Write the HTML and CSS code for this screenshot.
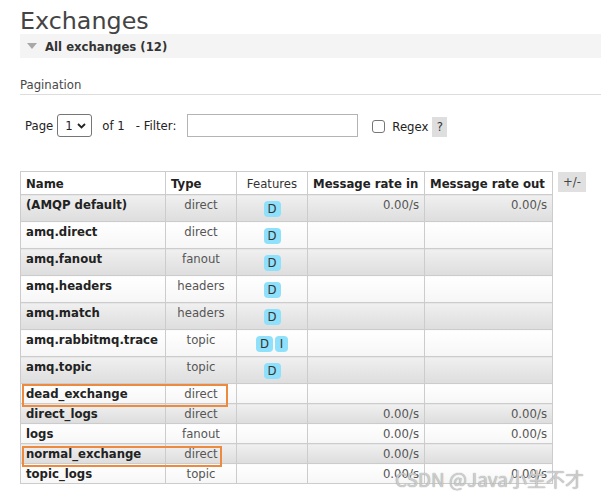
FILE: index.html
```html
<!DOCTYPE html>
<html lang="en">
<head>
<meta charset="utf-8">
<title>Exchanges</title>
<link rel="stylesheet" href="styles.css">
</head>
<body>
<main class="page">
  <h1 class="title">Exchanges</h1>
  <div class="section-bar">
    <svg class="tri" width="10" height="6" viewBox="0 0 10 6"><path d="M0 0H10L5 6Z" fill="#a8a8a8"/></svg>
    <span>All exchanges (12)</span>
  </div>
  <h3 class="pag-title">Pagination</h3>
  <div class="pager">
    <span class="lbl">Page</span>
    <span class="select"><span class="sel-val">1</span><svg width="9" height="6" viewBox="0 0 9 6"><path d="M1 1L4.5 4.5L8 1" fill="none" stroke="#222" stroke-width="1.8"/></svg></span>
    <span class="of">of 1</span>
    <span class="filter-lbl">- Filter:</span>
    <span class="input"></span>
    <span class="checkbox"></span>
    <span class="regex">Regex</span>
    <span class="help">?</span>
  </div>
  <div class="table-wrap">
    <table class="list">
      <colgroup>
        <col class="c-name"><col class="c-type"><col class="c-feat"><col class="c-in"><col class="c-out">
      </colgroup>
      <thead>
        <tr>
          <th>Name</th>
          <th>Type</th>
          <th class="plain">Features</th>
          <th>Message rate in</th>
          <th>Message rate out</th>
        </tr>
      </thead>
      <tbody>
        <tr class="alt1"><td class="name">(AMQP default)</td><td class="c">direct</td><td class="feat"><div class="badges"><abbr class="badge">D</abbr></div></td><td class="r">0.00/s</td><td class="r">0.00/s</td></tr>
        <tr class="alt2"><td class="name">amq.direct</td><td class="c">direct</td><td class="feat"><div class="badges"><abbr class="badge">D</abbr></div></td><td class="r"></td><td class="r"></td></tr>
        <tr class="alt1"><td class="name">amq.fanout</td><td class="c">fanout</td><td class="feat"><div class="badges"><abbr class="badge">D</abbr></div></td><td class="r"></td><td class="r"></td></tr>
        <tr class="alt2"><td class="name">amq.headers</td><td class="c">headers</td><td class="feat"><div class="badges"><abbr class="badge">D</abbr></div></td><td class="r"></td><td class="r"></td></tr>
        <tr class="alt1"><td class="name">amq.match</td><td class="c">headers</td><td class="feat"><div class="badges"><abbr class="badge">D</abbr></div></td><td class="r"></td><td class="r"></td></tr>
        <tr class="alt2"><td class="name">amq.rabbitmq.trace</td><td class="c">topic</td><td class="feat"><div class="badges"><abbr class="badge">D</abbr><abbr class="badge">I</abbr></div></td><td class="r"></td><td class="r"></td></tr>
        <tr class="alt1"><td class="name">amq.topic</td><td class="c">topic</td><td class="feat"><div class="badges"><abbr class="badge">D</abbr></div></td><td class="r"></td><td class="r"></td></tr>
        <tr class="alt2"><td class="name">dead_exchange</td><td class="c">direct</td><td class="feat"></td><td class="r"></td><td class="r"></td></tr>
        <tr class="alt1"><td class="name">direct_logs</td><td class="c">direct</td><td class="feat"></td><td class="r">0.00/s</td><td class="r">0.00/s</td></tr>
        <tr class="alt2"><td class="name">logs</td><td class="c">fanout</td><td class="feat"></td><td class="r">0.00/s</td><td class="r">0.00/s</td></tr>
        <tr class="alt1"><td class="name">normal_exchange</td><td class="c">direct</td><td class="feat"></td><td class="r">0.00/s</td><td class="r"></td></tr>
        <tr class="alt2"><td class="name">topic_logs</td><td class="c">topic</td><td class="feat"></td><td class="r">0.00/s</td><td class="r">0.00/s</td></tr>
      </tbody>
    </table>
    <span class="toggle">+/-</span>
    <div class="mark mark-dead"></div>
    <div class="mark mark-normal"></div>
  </div>
</main>
<div class="watermark">CSDN @Java小生不才</div>
</body>
</html>
```

FILE: styles.css
```css
* { box-sizing: border-box; }
html, body { margin: 0; padding: 0; background: #fff; }
body {
  font-family: "DejaVu Sans", Verdana, sans-serif;
  font-size: 11.7px;
  color: #484848;
}
.page { padding-left: 20px; }

.title {
  margin: 0;
  padding-top: 8px;
  font-size: 23.8px;
  line-height: 26px;
  font-weight: normal;
  color: #444;
}

.section-bar {
  display: flex;
  align-items: center;
  height: 24px;
  background: #f4f4f4;
  padding-left: 7px;
  font-weight: bold;
  color: #333;
  line-height: 24px;
}
.section-bar span { padding-top: 1px; }
.tri { margin-right: 8px; margin-top: -1px; }

.pag-title {
  margin: 19px 0 0;
  font-size: 11.7px;
  font-weight: normal;
  line-height: 15px;
  padding-top: 1px;
  padding-bottom: 1px;
  border-bottom: 1px solid #ddd;
  color: #484848;
}

.pager {
  display: flex;
  align-items: center;
  margin-top: 19px;
  padding-left: 5px;
  height: 23px;
  color: #222;
}
.select {
  display: flex;
  align-items: center;
  justify-content: space-between;
  margin-left: 4px;
  width: 35px;
  height: 23px;
  border: 1px solid #767676;
  border-radius: 3px;
  padding: 0 5px 0 7px;
  background: #fff;
}
.of { margin-left: 10px; }
.filter-lbl { margin-left: 11px; }
.input {
  margin-left: 11px;
  width: 171px;
  height: 23px;
  border: 1px solid #b4b4b4;
  background: #fff;
}
.checkbox {
  margin-left: 14px;
  width: 13px;
  height: 13px;
  border: 1px solid #767676;
  border-radius: 3px;
  background: #fff;
  margin-top: 1px;
}
.regex { margin-left: 7px; padding-top: 2px; }
.help {
  margin-left: 4px;
  margin-top: 3px;
  width: 15px;
  height: 20px;
  line-height: 20px;
  text-align: center;
  background: #dedede;
  color: #333;
}

.table-wrap {
  position: relative;
  display: flex;
  align-items: flex-start;
  gap: 5px;
  margin-top: 34px;
}
table.list {
  border-collapse: collapse;
  table-layout: fixed;
  width: 532px;
}
.c-name { width: 145px; }
.c-type { width: 71px; }
.c-feat { width: 71px; }
.c-in { width: 117px; }
.c-out { width: 128px; }

table.list th,
table.list td {
  border: 1px solid #ccc;
  padding: 3px 5px 1px;
  line-height: 15px;
  vertical-align: top;
  white-space: nowrap;
  overflow: hidden;
}
table.list th {
  padding: 5px 5px 2px;
  text-align: left;
  font-weight: bold;
  color: #222;
  background: #fff;
}
table.list th.plain { font-weight: normal; text-align: center; color: #333; }
table.list td { color: #555; }
table.list td.name { font-weight: bold; color: #222; }
table.list td.c { text-align: center; }
table.list td.r { text-align: right; }
table.list td.feat { text-align: center; padding-top: 2px; padding-bottom: 2px; }

tr.alt1 td { background: linear-gradient(#f0f0f0, #dddddd); }
tr.alt2 td { background: linear-gradient(#ffffff, #f6f6f6); }

.badges {
  display: flex;
  justify-content: center;
  gap: 2px;
  padding: 4px 0 2px;
}
.badge {
  display: block;
  min-width: 13px;
  height: 16px;
  line-height: 16px;
  padding: 0 4px;
  border-radius: 4px;
  background: #8fe0fa;
  color: #333;
  text-align: center;
  text-decoration: none;
}

.toggle {
  margin-top: 1px;
  width: 28px;
  height: 20px;
  line-height: 20px;
  text-align: center;
  background: #e0e0e0;
  color: #444;
}

.mark {
  position: absolute;
  border: 2px solid #ec8a3f;
}
.mark-dead { left: 2px; top: 213px; width: 206px; height: 23px; }
.mark-normal { left: 2px; top: 275px; width: 200px; height: 21px; }

.watermark {
  position: absolute;
  left: 395px;
  top: 467px;
  font-family: "Noto Sans CJK SC", sans-serif;
  font-size: 19px;
  line-height: 24px;
  color: rgba(225, 225, 225, 0.8);
  text-shadow: 0 0 1px #777;
  white-space: nowrap;
}
```
